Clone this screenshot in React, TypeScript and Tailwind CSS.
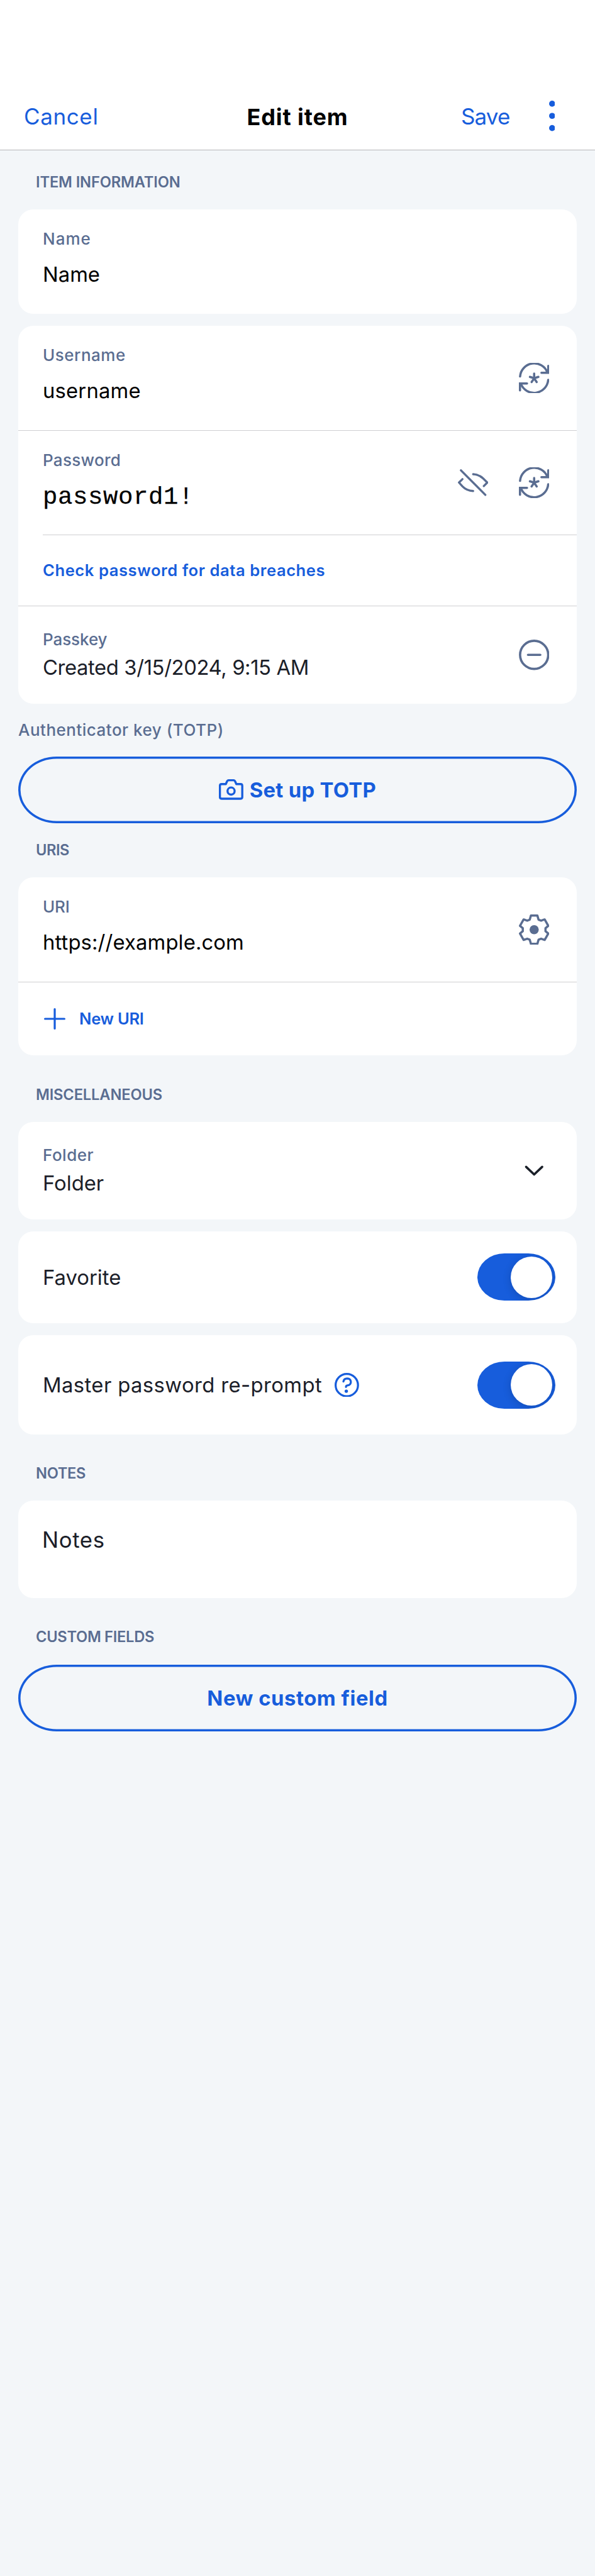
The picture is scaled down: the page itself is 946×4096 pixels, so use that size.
import type { ReactNode } from "react";

function RefreshIcon() {
  return (
    <svg viewBox="0 0 180 180" className="size-[48.5px]" fill="none" stroke="currentColor" strokeWidth="13" strokeLinecap="round">
      <path d="M7 80A83.5 83.5 0 0 1 168 56" />
      <path d="M173.5 18V58.5H133" />
      <path d="M173 100A83.5 83.5 0 0 1 12 124" />
      <path d="M6.500 162V121.500H48" />
      <path d="M90 63V91M65 82.500L90 91L115 82.500M75 113L90 91L105 113" />
    </svg>
  );
}

function EyeSlashIcon() {
  return (
    <svg viewBox="0 0 180 180" className="size-[48.5px]" fill="none" stroke="currentColor" strokeWidth="12.500" strokeLinecap="round" strokeLinejoin="round">
      <path d="M18 18L162 163" />
      <path d="M27 70L6.500 90L27 113Q52 139 90 140" />
      <path d="M90 41Q123 42 149 66L173.500 90L153 111" />
    </svg>
  );
}

function MinusCircleIcon() {
  return (
    <svg viewBox="0 0 60 60" className="size-[48.5px]" fill="none" stroke="currentColor" strokeWidth="4.500" strokeLinecap="round">
      <circle cx="30" cy="30" r="27.700" />
      <path d="M18 30H42" />
    </svg>
  );
}

function GearIcon() {
  return (
    <svg viewBox="0 0 180 180" className="size-[48.5px]" fill="none" stroke="currentColor" strokeWidth="13" strokeLinejoin="round">
      <path d="M71 6.500H109L116 31L131 37L152 29.500L173.500 67L157 81V99L173.500 113L152 150.500L131 143L116 149L109 173.500H71L64 149L49 143L28 150.500L6.500 113L23 99V81L6.500 67L28 29.500L49 37L64 31Z" />
      <circle cx="90" cy="90" r="27" fill="currentColor" stroke="none" />
    </svg>
  );
}

function CameraIcon() {
  return (
    <svg viewBox="0 0 144 144" className="size-[38.8px]" fill="none" stroke="currentColor" strokeWidth="12.500" strokeLinejoin="round">
      <path d="M41 40L48 24Q51 17 58 17H86Q93 17 96 24L103 40H128Q138 40 138 50V116Q138 126 128 126H16Q6 126 6 116V50Q6 40 16 40Z" />
      <circle cx="72" cy="81" r="21" />
    </svg>
  );
}

function HelpIcon() {
  return (
    <svg viewBox="0 0 144 144" className="size-[38.8px]" fill="none" stroke="currentColor" strokeWidth="12" strokeLinecap="round">
      <circle cx="72" cy="72" r="66" />
      <path d="M52 51Q55 33 74 33Q95 34 96 53Q95 73 76 74Q67 75 67 83" />
      <circle cx="69" cy="108" r="10" fill="currentColor" stroke="none" />
    </svg>
  );
}

function PlusIcon() {
  return (
    <svg viewBox="0 0 42 42" className="size-[34px]" fill="none" stroke="currentColor" strokeWidth="4" strokeLinecap="round">
      <path d="M21 2V40M2 21H40" />
    </svg>
  );
}

function ChevronIcon() {
  return (
    <svg viewBox="0 0 60 60" className="size-[48.5px]" fill="none" stroke="#1b2029" strokeWidth="4.500" strokeLinecap="round" strokeLinejoin="round">
      <path d="M14.200 22.700L30 37.800L45.800 22.700" />
    </svg>
  );
}

function MoreIcon() {
  return (
    <svg viewBox="0 0 12 60" className="h-[48.5px] w-[9.7px]" fill="currentColor">
      <circle cx="6" cy="6" r="6" />
      <circle cx="6" cy="30" r="6" />
      <circle cx="6" cy="54" r="6" />
    </svg>
  );
}

function SectionTitle({ children, className }: { children: ReactNode; className: string }) {
  return <h2 className={`pl-[28px] text-[23.7px] leading-[32px] font-semibold whitespace-nowrap text-[#5a6d91] ${className}`}>{children}</h2>;
}

function Card({ children, className }: { children: ReactNode; className: string }) {
  return <section className={`overflow-hidden rounded-[24px] bg-white ${className}`}>{children}</section>;
}

function Label({ children, className }: { children: ReactNode; className: string }) {
  return <div className={`text-[26px] leading-[34px] font-medium whitespace-nowrap text-[#5a6d91] ${className}`}>{children}</div>;
}

function Value({ children, className }: { children: ReactNode; className: string }) {
  return <div className={`text-[32.8px] leading-[42px] whitespace-nowrap ${className}`}>{children}</div>;
}

function Row({ children, icons, className }: { children: ReactNode; icons?: ReactNode; className: string }) {
  return (
    <div className={`flex justify-between pr-[43.7px] pl-[39px] ${className}`}>
      <div>{children}</div>
      <div className="flex items-center gap-[48.5px] text-[#5a6d91]">{icons}</div>
    </div>
  );
}

function Divider({ className = "" }: { className?: string }) {
  return <div className={`h-px bg-[#cfcfd1] ${className}`} />;
}

function Toggle() {
  return (
    <button role="switch" aria-checked="true" className="flex h-[75px] w-[123.5px] items-center justify-end overflow-hidden rounded-[43px/37.5px] bg-[#175ddc] pr-[4.800px]">
      <span className="size-[65.5px] rounded-full bg-white shadow-[0_3px_14px_rgba(0,0,0,0.16)]" />
    </button>
  );
}

function OutlineButton({ children, className }: { children: ReactNode; className: string }) {
  return (
    <button className={`flex h-[106.5px] w-full items-center justify-center rounded-[61px/53px] text-[32.8px] leading-[42px] font-bold whitespace-nowrap text-[#175ddc] shadow-[inset_0_0_0_3.6px_#175ddc] ${className}`}>
      {children}
    </button>
  );
}

export default function App() {
  return (
    <div className="min-h-[4096px] w-[946px] bg-[#f3f6f9] font-['Inter',sans-serif]">
      <header className="grid h-[239px] grid-cols-[1fr_auto_1fr] items-center border-b border-[#b5b6b7] bg-white pt-[131px] text-[35px] leading-[40px] text-[#175ddc]">
        <button className="justify-self-start pl-[38px] tracking-[0.62px]">Cancel</button>
        <h1 className="pt-[3px] text-[36px] font-bold tracking-[0.9px] text-black">Edit item</h1>
        <div className="flex items-center justify-end gap-[62px] pr-[63.8px]">
          <button className="tracking-[-0.87px]">Save</button>
          <MoreIcon />
        </div>
      </header>

      <main className="px-[29px]">
        <SectionTitle className="pt-[35px] tracking-[-0.14px]">ITEM INFORMATION</SectionTitle>
        <Card className="mt-[27px] h-[166px]">
          <Row className="h-full">
            <Label className="pt-[30px] tracking-[1px]">Name</Label>
            <Value className="mt-[18px] text-black">Name</Value>
          </Row>
        </Card>

        <Card className="mt-[19px] h-[601px]">
          <Row className="h-[166px]" icons={<RefreshIcon />}>
            <Label className="pt-[30px] tracking-[0.5px]">Username</Label>
            <Value className="mt-[18px] tracking-[0.18px] text-black">username</Value>
          </Row>
          <Divider />
          <Row className="h-[165px]" icons={<><EyeSlashIcon /><RefreshIcon /></>}>
            <Label className="pt-[30px] tracking-[0.3px]">Password</Label>
            <div className="mt-[19px] font-['Liberation_Mono',monospace] text-[39px] leading-[46px] tracking-[0.6px] text-black [-webkit-text-stroke:0.25px_#000]">password1!</div>
          </Row>
          <Divider className="ml-[39px]" />
          <Row className="h-[112px] items-center">
            <button className="block text-[25.6px] leading-[34px] font-semibold tracking-[0.56px] text-[#175ddc]">Check password for data breaches</button>
          </Row>
          <Divider />
          <Row className="h-[155px]" icons={<MinusCircleIcon />}>
            <Label className="pt-[36px] tracking-[-0.08px]">Passkey</Label>
            <Value className="mt-[6px] tracking-[-0.39px] text-[#1b2029]">Created 3/15/2024, 9:15 AM</Value>
          </Row>
        </Card>

        <Label className="pt-[25px] tracking-[0.49px]">Authenticator key (TOTP)</Label>
        <OutlineButton className="mt-[24.5px] gap-[10px] tracking-[0.33px]">
          <CameraIcon />
          <span>Set up TOTP</span>
        </OutlineButton>

        <SectionTitle className="pt-[27px] tracking-[-0.5px]">URIS</SectionTitle>
        <Card className="mt-[27px] h-[283px]">
          <Row className="h-[166px]" icons={<GearIcon />}>
            <Label className="pt-[30px] tracking-[-0.2px]">URI</Label>
            <Value className="mt-[18px] tracking-[0.12px] text-black">https://example.com</Value>
          </Row>
          <Divider />
          <button className="flex h-[116px] items-center gap-[22px] pl-[41px] text-[25.6px] leading-[34px] font-semibold tracking-[-0.3px] text-[#175ddc]">
            <PlusIcon />
            New URI
          </button>
        </Card>

        <SectionTitle className="pt-[46.5px] tracking-[-0.15px]">MISCELLANEOUS</SectionTitle>
        <Card className="mt-[27px] h-[155px]">
          <Row className="h-full" icons={<ChevronIcon />}>
            <Label className="pt-[36px] tracking-[0.5px]">Folder</Label>
            <Value className="mt-[6px] text-[#1b2029]">Folder</Value>
          </Row>
        </Card>

        <Card className="mt-[19.5px] flex h-[145.500px] items-center justify-between pr-[34.3px] pl-[39px]">
          <Value className="text-[#1b2029]">Favorite</Value>
          <Toggle />
        </Card>

        <Card className="mt-[19.500px] flex h-[158px] items-center justify-between pr-[34.3px] pl-[39px]">
          <div className="flex items-center gap-[20px] text-[#175ddc]">
            <Value className="tracking-[0.4px] text-[#1b2029]">Master password re-prompt</Value>
            <HelpIcon />
          </div>
          <Toggle />
        </Card>

        <SectionTitle className="pt-[46px] tracking-[-0.36px]">NOTES</SectionTitle>
        <Card className="mt-[27px] h-[155px] pt-[40px] pl-[38px]">
          <div className="text-[34.7px] leading-[44px] tracking-[0.63px] text-[#1b2029]">Notes</div>
        </Card>

        <SectionTitle className="pt-[46px] tracking-[-0.3px]">CUSTOM FIELDS</SectionTitle>
        <OutlineButton className="mt-[27.5px] tracking-[0.54px]">New custom field</OutlineButton>
      </main>
    </div>
  );
}
